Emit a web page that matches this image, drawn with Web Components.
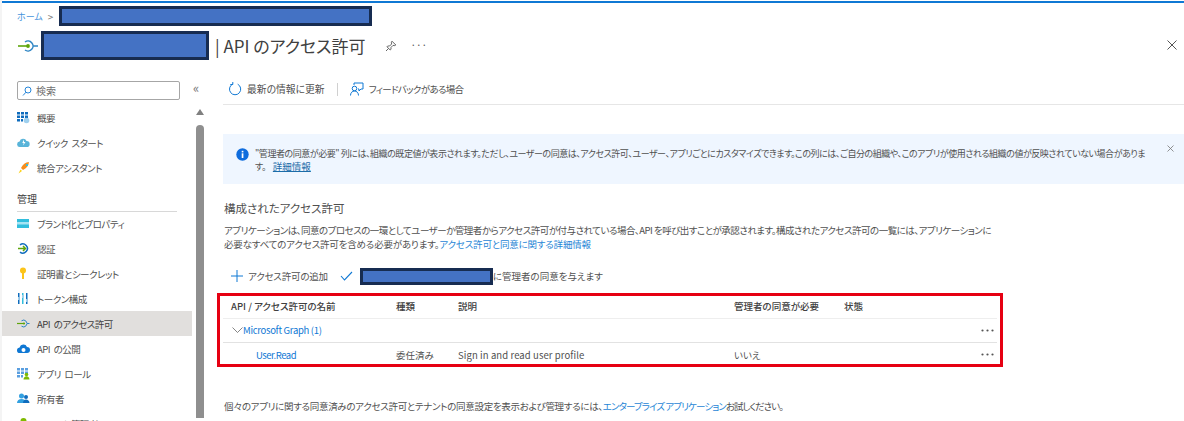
<!DOCTYPE html>
<html lang="ja">
<head>
<meta charset="utf-8">
<title>API のアクセス許可</title>
<style>
html,body{margin:0;height:421px;overflow:hidden;background:#fff;}
body{font-family:"Noto Sans CJK JP","Noto Sans",sans-serif;color:#505050;font-size:10px;font-feature-settings:"palt";}
</style>
</head>
<body>
<az-blade>
  <az-header slot="header"></az-header>
  <az-sidebar slot="sidebar">
    <az-nav-item label="概要"><svg slot="icon" width="13" height="13" viewBox="0 0 13 13"><path fill="#0f6cbd" d="M0 1h3v2.500H0zM4 1h3v2.500H4zM8 1h3v2.500H8zM0 4.500h3V7H0zM4 4.500h3V7H4zM8 4.500h3V7H8zM0 8h3v2.500H0zM4 8h2v2.500H4z"/><circle cx="9.500" cy="9.500" r="2.800" fill="#9fd0ee"/></svg></az-nav-item>
    <az-nav-item label="クイック スタート"><svg slot="icon" width="13" height="13" viewBox="0 0 13 13"><path fill="#59b4d9" d="M3 11a2.700 2.700 0 0 1-.4-5.400A3.600 3.600 0 0 1 9.500 5a3 3 0 0 1 .3 6z"/><path fill="#fff" d="M6.800 3.500 5.300 7h1.400l-.6 2.500L8.500 6H7z"/></svg></az-nav-item>
    <az-nav-item label="統合アシスタント"><svg slot="icon" width="13" height="13" viewBox="0 0 13 13"><path fill="#f78d1e" d="M12 1C8.500 1.300 5.500 3.500 4 7l2 2c3.500-1.500 5.700-4.500 6-8z"/><path fill="#fcd116" d="M3.500 8.500 5 10l-3.500 2.500z"/><path fill="#32bedd" d="M9 3h2v2H9z"/></svg></az-nav-item>
    <az-nav-group label="管理"></az-nav-group>
    <az-nav-item label="ブランド化とプロパティ"><svg slot="icon" width="13" height="13" viewBox="0 0 13 13"><rect y="2" width="12" height="9" fill="#32bedd"/><rect y="5" width="12" height="2.500" fill="#a6e4f3"/></svg></az-nav-item>
    <az-nav-item label="認証"><svg slot="icon" width="13" height="13" viewBox="0 0 13 13"><path fill="none" stroke="#0f6cbd" stroke-width="1.500" d="M3 2.800a4.600 4.600 0 1 1 0 7.400"/><path fill="none" stroke="#5ea50b" stroke-width="1.500" d="M1 6.500h7M6 4l2.500 2.500L6 9"/></svg></az-nav-item>
    <az-nav-item label="証明書とシークレット"><svg slot="icon" width="13" height="13" viewBox="0 0 13 13"><circle cx="6" cy="3.500" r="3" fill="#fcc419"/><path fill="#fcc419" d="M5 5h2v7H5z"/></svg></az-nav-item>
    <az-nav-item label="トークン構成"><svg slot="icon" width="13" height="13" viewBox="0 0 13 13"><path fill="#0f6cbd" d="M1 1h1.500v11H1zM9 1h1.500v11H9z"/><path fill="#32bedd" d="M5 1h1.500v11H5z"/><path fill="#9fd0ee" d="M1 5h1.500v3H1zM9 7h1.500v3H9zM5 3h1.500v3H5z"/></svg></az-nav-item>
    <az-nav-item label="API のアクセス許可" selected><svg slot="icon" width="13" height="13" viewBox="0 0 13 13"><path fill="none" stroke="#2f86c5" stroke-width="1" d="M4.500 3.800a3.400 3.400 0 1 1 0 5.400M10 6.500h2.500"/><path stroke="#5ea50b" stroke-width="1.200" d="M0 6.500h7"/><circle cx="7" cy="6.500" r="1.100" fill="#5ea50b"/></svg></az-nav-item>
    <az-nav-item label="API の公開"><svg slot="icon" width="13" height="13" viewBox="0 0 13 13"><path fill="#0f78d4" d="M3 11a2.800 2.800 0 0 1-.4-5.600A3.900 3.900 0 0 1 10 5a3 3 0 0 1 0 6z"/><circle cx="6.500" cy="8" r="2" fill="#fff"/></svg></az-nav-item>
    <az-nav-item label="アプリ ロール"><svg slot="icon" width="13" height="13" viewBox="0 0 13 13"><path fill="#5a9fe0" d="M0 1h3v2.500H0zM4 1h3v2.500H4zM8 1h3v2.500H8zM0 4.500h3V7H0zM4 4.500h3V7H4zM8 4.500h3V7H8zM0 8h3v2.500H0zM4 8h2v2.500H4z"/><circle cx="9.500" cy="7.500" r="1.800" fill="#7fba00"/><path fill="#7fba00" d="M6.500 12.500c0-2 1.300-3.300 3-3.300s3 1.300 3 3.300z"/></svg></az-nav-item>
    <az-nav-item label="所有者"><svg slot="icon" width="13" height="13" viewBox="0 0 13 13"><circle cx="4.500" cy="4" r="2.500" fill="#32a0e0"/><path fill="#32a0e0" d="M0 11c0-2.800 2-4 4.500-4S9 8.200 9 11z"/><circle cx="9" cy="5" r="2" fill="#0f6cbd"/><path fill="#0f6cbd" d="M6 11c0-2.300 1.300-3.500 3-3.500s3.500 1.200 3.500 3.500z"/></svg></az-nav-item>
    <az-nav-item label="ロールと管理者"><svg slot="icon" width="13" height="13" viewBox="0 0 13 13"><circle cx="6.500" cy="4" r="3" fill="#7fba00"/><path fill="#7fba00" d="M1 13c0-3.500 2.500-5 5.500-5s5.500 1.500 5.500 5z"/></svg></az-nav-item>
  </az-sidebar>
  <az-toolbar slot="main"></az-toolbar>
  <az-notice slot="main"></az-notice>
  <az-permissions slot="main"></az-permissions>
</az-blade>
<script>
// shared bits
const redactCss = `
.redact{display:inline-block;box-sizing:border-box;background:#4472c4;border:3px solid #172c51;flex:none;}
`;
const dots = `<svg class="dots" width="13" height="3" viewBox="0 0 13 3"><circle cx="1.500" cy="1.500" r="1.100"/><circle cx="6.500" cy="1.500" r="1.100"/><circle cx="11.500" cy="1.500" r="1.100"/></svg>`;

class AzBlade extends HTMLElement {
  constructor() {
    super();
    this.attachShadow({ mode: 'open' }).innerHTML = `
<style>
:host{display:block;width:1184px;height:421px;overflow:hidden;box-sizing:border-box;border-left:2px solid #f4f4f4;background:#fff;}
.top{height:2px;background:#0f78d4;border-top:1px solid #fff;}
.body{display:grid;grid-template-columns:213px 1fr;height:340px;}
</style>
<div class="top"></div>
<slot name="header"></slot>
<div class="body">
  <div><slot name="sidebar"></slot></div>
  <div><slot name="main"></slot></div>
</div>`;
  }
}
customElements.define('az-blade', AzBlade);

class AzHeader extends HTMLElement {
  constructor() {
    super();
    this.attachShadow({ mode: 'open' }).innerHTML = `
<style>
:host{display:block;height:75px;box-sizing:border-box;padding:3px 0 0 15px;position:relative;}
${redactCss}
.crumb{display:flex;align-items:center;height:20px;font-size:9px;}
.crumb a{color:#0f78d4;opacity:.8;}
.crumb span{margin:0 6px 0 5px;color:#777;font-size:10px;}
.crumb .redact{width:313px;height:20px;}
.title{display:flex;align-items:center;height:29px;margin-top:5px;font-size:17px;color:#404040;}
.title .logo{margin-right:2px;flex:none;}
.title .redact{width:168px;height:29px;margin-right:6px;}
.title .pin{margin-left:20px;}
.title .more{margin-left:13px;font-size:10px;color:#555;letter-spacing:0;position:relative;top:-1px;}
.close{position:absolute;right:7px;top:37px;}
</style>
<div class="crumb"><a>ホーム</a><span>&gt;</span><div class="redact"></div></div>
<div class="title">
  <svg class="logo" width="22" height="14" viewBox="0 0 22 14"><path fill="none" stroke="#2f86c5" stroke-width="1.500" d="M8 3a5 5 0 1 1 0 8M16 7h5"/><path stroke="#5ea50b" stroke-width="1.600" d="M1 7h11"/><circle cx="11" cy="7" r="1.900" fill="#5ea50b"/></svg>
  <div class="redact"></div>
  <span>| API のアクセス許可</span>
  <svg class="pin" width="12" height="12" viewBox="0 0 12 12"><path fill="none" stroke="#555" stroke-width=".9" d="M7 1.200 10.800 5 9.800 5.600 8 5.400 6 7.400 6 9.300 5.200 10 2 6.800 2.700 6 4.600 6 6.600 4 6.400 2.200zM3.500 8.500 1 11"/></svg>
  <span class="more">···</span>
</div>
<svg class="close" width="10" height="10" viewBox="0 0 10 10"><path stroke="#555" stroke-width="1" d="M.5.500l9 9M9.500.500l-9 9"/></svg>`;
  }
}
customElements.define('az-header', AzHeader);

class AzSidebar extends HTMLElement {
  constructor() {
    super();
    this.attachShadow({ mode: 'open' }).innerHTML = `
<style>
:host{display:block;position:relative;height:340px;box-sizing:border-box;padding-top:3px;}
.search{display:flex;align-items:center;gap:4px;box-sizing:border-box;margin-left:15px;width:163px;height:19px;border:1px solid #a6a6a6;border-radius:2px;padding-left:4px;color:#707070;font-size:10px;}
.collapse{position:absolute;left:191px;top:3px;font-size:13px;color:#777;line-height:14px;}
.nav{margin-top:5px;width:190px;}
.bar{position:absolute;left:194px;top:28px;width:8px;bottom:0;}
.up{width:0;height:0;margin:3px auto 0;border-left:4px solid transparent;border-right:4px solid transparent;border-bottom:6px solid #808080;}
.thumb{position:absolute;left:0;top:19px;bottom:0;width:8px;background:#8f8f8f;border-radius:4px 4px 0 0;}
</style>
<div class="search">
  <svg width="10" height="10" viewBox="0 0 10 10"><circle cx="6" cy="4" r="3" fill="none" stroke="#0f78d4" stroke-width=".9"/><path stroke="#0f78d4" stroke-width=".9" d="M4 6.200 1 9.500"/></svg>
  <span>検索</span>
</div>
<div class="collapse">«</div>
<div class="nav"><slot></slot></div>
<div class="bar"><div class="up"></div><div class="thumb"></div></div>`;
  }
}
customElements.define('az-sidebar', AzSidebar);

class AzNavItem extends HTMLElement {
  constructor() {
    super();
    this.attachShadow({ mode: 'open' }).innerHTML = `
<style>
:host{display:flex;align-items:center;height:25px;box-sizing:border-box;padding-left:15px;font-size:9.500px;letter-spacing:-.5px;word-spacing:2px;color:#505050;}
:host([selected]){background:#e1dfdd;color:#404040;}
.ic{width:20px;display:flex;align-items:center;flex:none;}
</style>
<div class="ic"><slot name="icon"></slot></div><span></span>`;
    this.shadowRoot.querySelector('span').textContent = this.getAttribute('label');
  }
}
customElements.define('az-nav-item', AzNavItem);

class AzNavGroup extends HTMLElement {
  constructor() {
    super();
    this.attachShadow({ mode: 'open' }).innerHTML = `
<style>
:host{display:block;margin:0 15px -1px;padding:12px 0 5px;border-bottom:1px solid #d8d8d8;font-size:10px;line-height:14px;color:#404040;height:14px;width:160px;}
</style><span></span>`;
    this.shadowRoot.querySelector('span').textContent = this.getAttribute('label');
  }
}
customElements.define('az-nav-group', AzNavGroup);

class AzToolbar extends HTMLElement {
  constructor() {
    super();
    this.attachShadow({ mode: 'open' }).innerHTML = `
<style>
:host{display:flex;align-items:center;margin-left:8px;padding:0 0 4px 5px;height:22px;border-bottom:1px solid #e6e6e6;font-size:9.800px;color:#505050;}
svg{flex:none;}
.t{margin-left:5px;}
.sep{width:1px;height:13px;background:#d0d0d0;margin:0 12px;}
.fb{font-size:9.500px;letter-spacing:-.7px;}
</style>
<svg width="14" height="14" viewBox="0 0 14 14"><path fill="none" stroke="#0f78d4" stroke-width="1" d="M4.700 2.100a5.600 5.600 0 1 0 5 .1M4.800 0v2.500H2.300"/></svg>
<span class="t">最新の情報に更新</span>
<div class="sep"></div>
<svg width="14" height="14" viewBox="0 0 14 14"><path fill="none" stroke="#0f78d4" stroke-width="1" d="M4 3V1h9v6h-2l-2 2V7H8"/><circle cx="4.500" cy="6.500" r="2.300" fill="none" stroke="#0f78d4"/><path fill="none" stroke="#0f78d4" d="M.5 13.500c0-2.700 1.800-4.500 4-4.500s4 1.800 4 4.500"/></svg>
<span class="t fb">フィードバックがある場合</span>`;
  }
}
customElements.define('az-toolbar', AzToolbar);

class AzNotice extends HTMLElement {
  constructor() {
    super();
    this.attachShadow({ mode: 'open' }).innerHTML = `
<style>
:host{display:flex;position:relative;margin:29px 0 0 8px;height:50px;box-sizing:border-box;padding:14px 0 0 13px;background:#eff6ff;font-size:9px;line-height:12px;color:#505050;}
svg.i{flex:none;margin-right:6px;}
a{color:#1b6ca8;text-decoration:underline;margin-left:7px;font-size:9.500px;letter-spacing:0;}
.x{position:absolute;right:10px;top:11px;}
p{margin:0;white-space:nowrap;letter-spacing:-.45px;}
</style>
<svg class="i" width="13" height="13" viewBox="0 0 13 13"><circle cx="6.500" cy="6.500" r="6.200" fill="#0f6cdd"/><rect x="5.700" y="5.300" width="1.700" height="4.700" fill="#fff"/><rect x="5.700" y="2.800" width="1.700" height="1.600" fill="#fff"/></svg>
<p>"管理者の同意が必要" 列には、組織の既定値が表示されます。ただし、ユーザーの同意は、アクセス許可、ユーザー、アプリごとにカスタマイズできます。この列には、ご自分の組織や、このアプリが使用される組織の値が反映されていない場合がありま<br>す。<a>詳細情報</a></p>
<svg class="x" width="7" height="7" viewBox="0 0 7 7"><path stroke="#777" stroke-width=".8" d="M.5.500l6 6M6.500.500l-6 6"/></svg>`;
  }
}
customElements.define('az-notice', AzNotice);

class AzPermissions extends HTMLElement {
  constructor() {
    super();
    this.attachShadow({ mode: 'open' }).innerHTML = `
<style>
:host{display:block;margin-left:2px;font-size:9.500px;color:#505050;}
${redactCss}
h2{margin:16px 0 0 7px;font-size:11.500px;line-height:16px;font-weight:400;color:#505050;}
.desc{margin:7px 0 0 7px;white-space:nowrap;line-height:14px;font-size:9.500px;}
.l1{letter-spacing:-.5px;}
.l2{letter-spacing:-.18px;}
a{color:#1f86d6;}
.cmd{display:flex;align-items:center;height:18px;margin:16px 0 0 14px;font-size:9.500px;}
.cmd .plus{margin-right:5px;}
.cmd .check{margin:0 7px 0 12px;}
.cmd .add{letter-spacing:-.2px;}
.cmd .redact{width:133px;height:17px;}
.box{box-sizing:border-box;width:786px;height:74px;margin-top:8px;border:3px solid #e60012;padding-left:3px;padding-right:3px;}
.row{display:grid;grid-template-columns:165px 62px 276px 110px 1fr 24px;align-items:center;padding-left:8px;box-sizing:border-box;}
.head{height:23px;padding-bottom:2px;border-bottom:1px solid #eeeeee;font-weight:500;color:#404040;}
.group{border-bottom:1px solid #e2e2e2;color:#0f78d4;height:24px;padding-bottom:1px;}
.group .n{grid-column:1 / 6;display:flex;align-items:center;gap:0;margin-left:1px;letter-spacing:-.3px;}
.item{height:23px;}
.item .n{padding-left:25px;color:#0f78d4;letter-spacing:-.5px;}
.item .s{letter-spacing:.1px;}
.dots{fill:#555;margin-left:8px;}
.foot{margin:32px 0 0 7px;font-size:9.500px;letter-spacing:-.3px;}
.foot a{letter-spacing:-.9px;}
.foot .tail{letter-spacing:-1px;}
</style>
<h2>構成されたアクセス許可</h2>
<div class="desc"><span class="l1">アプリケーションは、同意のプロセスの一環としてユーザーか管理者からアクセス許可が付与されている場合、API を呼び出すことが承認されます。構成されたアクセス許可の一覧には、アプリケーションに</span><br><span class="l2">必要なすべてのアクセス許可を含める必要があります。<a>アクセス許可と同意に関する詳細情報</a></span></div>
<div class="cmd">
  <svg class="plus" width="12" height="12" viewBox="0 0 12 12"><path stroke="#0f78d4" stroke-width="1" d="M6 0v12M0 6h12"/></svg>
  <span class="add">アクセス許可の追加</span>
  <svg class="check" width="13" height="10" viewBox="0 0 13 10"><path fill="none" stroke="#0f78d4" stroke-width="1.100" d="M1 5l3.500 4L12 1"/></svg>
  <div class="redact"></div>
  <span>に管理者の同意を与えます</span>
</div>
<div class="box">
  <div class="row head"><span>API / アクセス許可の名前</span><span>種類</span><span>説明</span><span>管理者の同意が必要</span><span>状態</span><span></span></div>
  <div class="row group"><span class="n"><svg width="11" height="6" viewBox="0 0 11 6"><path fill="none" stroke="#666" stroke-width=".8" d="M.5.500l5 5 5-5"/></svg>Microsoft Graph (1)</span>${dots}</div>
  <div class="row item"><span class="n">User.Read</span><span>委任済み</span><span class="s">Sign in and read user profile</span><span>いいえ</span><span></span>${dots}</div>
</div>
<div class="foot">個々のアプリに関する同意済みのアクセス許可とテナントの同意設定を表示および管理するには、<a>エンタープライズ アプリケーション</a><span class="tail">お試しください。</span></div>`;
  }
}
customElements.define('az-permissions', AzPermissions);
</script>
</body>
</html>
